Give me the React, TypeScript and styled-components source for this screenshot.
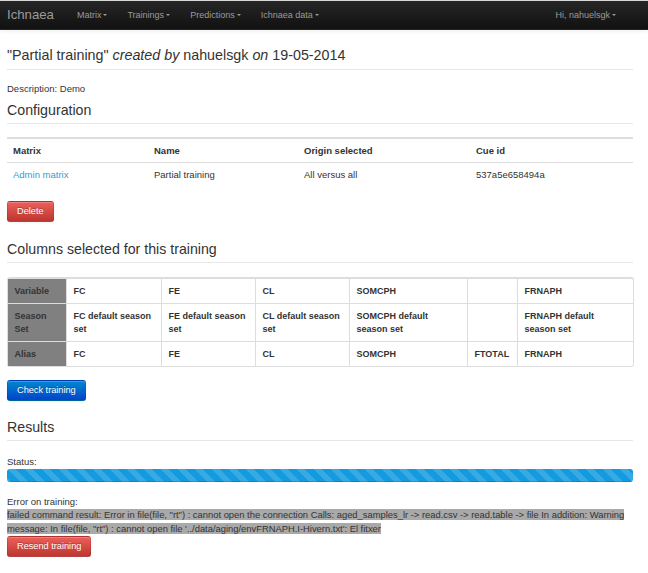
import React from "react";
import styled, { createGlobalStyle } from "styled-components";

const GlobalStyle = createGlobalStyle`
  html, body {
    margin: 0;
    padding: 0;
    background: #ffffff;
  }
  body {
    font-family: "Liberation Sans", Arial, Helvetica, sans-serif;
    font-size: 9.5px;
    line-height: 13px;
    color: #333333;
  }
  * { box-sizing: border-box; }
`;

const Navbar = styled.nav`
  height: 30px;
  border-top: 1px solid #d8d8d8;
  border-bottom: 1px solid #252525;
  background: linear-gradient(to bottom, #262626, #111111);
  box-shadow: 0 1px 4px rgba(0, 0, 0, 0.08);
  display: flex;
  align-items: center;
  padding: 0 22px 0 7px;
`;

const Brand = styled.a`
  font-size: 13.2px;
  color: #9a9a9a;
  text-decoration: none;
  margin-right: 13px;
  line-height: 28px;
`;

const NavList = styled.ul`
  display: flex;
  margin: 0;
  padding: 0;
  list-style: none;
  flex: 1;
`;

const NavRight = styled.ul`
  display: flex;
  margin: 0;
  padding: 0;
  list-style: none;
`;

const NavItem = styled.li`
  padding: 0 10px;
  font-size: 9px;
  color: #9a9a9a;
  line-height: 28px;
  display: flex;
  align-items: center;
`;

const Caret = styled.span`
  display: inline-block;
  width: 0;
  height: 0;
  margin-left: 2px;
  border-top: 2.5px solid #9a9a9a;
  border-left: 2px solid transparent;
  border-right: 2px solid transparent;
`;

const Container = styled.main`
  padding: 0 15px 0 7px;
`;

const PageHeader = styled.h1`
  margin: 15px 0 0;
  padding-bottom: 4px;
  border-bottom: 1px solid #e6e6e6;
  font-size: 14.3px;
  line-height: 20px;
  font-weight: normal;
  color: #333333;
`;

const Description = styled.p`
  margin: 12px 0 0;
  font-size: 9.5px;
  line-height: 13px;
`;

const SectionTitle = styled.h3<{ $top: number }>`
  margin: ${(p) => p.$top}px 0 0;
  padding-bottom: 3px;
  border-bottom: 1px solid #e6e6e6;
  font-size: 14.2px;
  line-height: 20px;
  font-weight: normal;
  color: #333333;
`;

const ConfigTable = styled.table`
  width: 100%;
  margin-top: 13px;
  border-collapse: collapse;
  table-layout: fixed;
  border-top: 2px solid #dddddd;

  th, td {
    text-align: left;
    padding: 5px 6px;
    font-size: 9.5px;
    line-height: 13px;
    vertical-align: top;
  }
  th {
    font-weight: bold;
  }
  td {
    border-top: 1px solid #dddddd;
  }
`;

const Link = styled.a`
  color: #2a9fd8;
  text-decoration: none;
`;

const Button = styled.button<{ $variant: "danger" | "primary"; $top: number }>`
  display: block;
  margin-top: ${(p) => p.$top}px;
  height: 21px;
  padding: 0 9px;
  font-family: inherit;
  font-size: 9.2px;
  line-height: 13px;
  color: #ffffff;
  text-shadow: 0 -1px 0 rgba(0, 0, 0, 0.25);
  border-radius: 3px;
  border: 1px solid;
  border-color: rgba(0, 0, 0, 0.1) rgba(0, 0, 0, 0.1) rgba(0, 0, 0, 0.25);
  box-shadow: inset 0 1px 0 rgba(255, 255, 255, 0.2), 0 1px 2px rgba(0, 0, 0, 0.05);
  background: ${(p) =>
    p.$variant === "danger"
      ? "linear-gradient(to bottom, #ee5f5b, #bd362f)"
      : "linear-gradient(to bottom, #0088cc, #0044cc)"};
  cursor: pointer;
`;

const GridTable = styled.table`
  width: 100%;
  margin-top: 14px;
  border-collapse: separate;
  border-spacing: 0;
  table-layout: fixed;
  border: 1px solid #dddddd;
  border-top: 2px solid #dddddd;
  border-left: 0;
  border-radius: 3px;

  th, td {
    text-align: left;
    padding: 5.5px 6.5px;
    font-size: 9px;
    line-height: 13px;
    font-weight: bold;
    vertical-align: top;
    border-left: 1px solid #dddddd;
    border-top: 1px solid #dddddd;
    color: #333333;
  }
  tr:first-child th, tr:first-child td {
    border-top: 0;
  }
  th {
    background: #808080;
    color: #333333;
  }
`;

const StatusLabel = styled.div<{ $top: number }>`
  margin-top: ${(p) => p.$top}px;
  font-size: 9.5px;
  line-height: 13px;
`;

const Progress = styled.div`
  height: 13px;
  margin-top: 1px;
  border-radius: 3px;
  background: #f5f5f5;
  overflow: hidden;
`;

const Bar = styled.div`
  height: 100%;
  background-color: #149bdf;
  background-image: linear-gradient(
    45deg,
    rgba(255, 255, 255, 0.15) 25%,
    transparent 25%,
    transparent 50%,
    rgba(255, 255, 255, 0.15) 50%,
    rgba(255, 255, 255, 0.15) 75%,
    transparent 75%,
    transparent
  );
  background-size: 17px 17px;
  box-shadow: inset 0 -1px 0 rgba(0, 0, 0, 0.15);
`;

const ErrorText = styled.div`
  font-size: 9.4px;
  line-height: 14px;
`;

const Highlight = styled.span`
  background: #a9a9a9;
  color: #333333;
`;

export default function App() {
  const gridCols = [59, 95, 94, 94, 118, 50, 116];
  return (
    <>
      <GlobalStyle />
      <Navbar>
        <Brand href="#">Ichnaea</Brand>
        <NavList>
          {["Matrix", "Trainings", "Predictions", "Ichnaea data"].map((t) => (
            <NavItem key={t}>
              {t}
              <Caret />
            </NavItem>
          ))}
        </NavList>
        <NavRight>
          <NavItem>
            Hi, nahuelsgk
            <Caret />
          </NavItem>
        </NavRight>
      </Navbar>
      <Container>
        <PageHeader>
          "Partial training" <em>created by</em> nahuelsgk <em>on</em> 19-05-2014
        </PageHeader>
        <Description>Description: Demo</Description>
        <SectionTitle $top={5}>Configuration</SectionTitle>
        <ConfigTable>
          <colgroup>
            <col style={{ width: 141 }} />
            <col style={{ width: 150 }} />
            <col style={{ width: 172 }} />
            <col style={{ width: 163 }} />
          </colgroup>
          <thead>
            <tr>
              <th>Matrix</th>
              <th>Name</th>
              <th>Origin selected</th>
              <th>Cue id</th>
            </tr>
          </thead>
          <tbody>
            <tr>
              <td>
                <Link href="#">Admin matrix</Link>
              </td>
              <td>Partial training</td>
              <td>All versus all</td>
              <td>537a5e658494a</td>
            </tr>
          </tbody>
        </ConfigTable>
        <Button $variant="danger" $top={15}>Delete</Button>
        <SectionTitle $top={17}>Columns selected for this training</SectionTitle>
        <GridTable>
          <colgroup>
            {gridCols.map((w, i) => (
              <col key={i} style={{ width: w }} />
            ))}
          </colgroup>
          <tbody>
            <tr>
              <th>Variable</th>
              <td>FC</td>
              <td>FE</td>
              <td>CL</td>
              <td>SOMCPH</td>
              <td></td>
              <td>FRNAPH</td>
            </tr>
            <tr>
              <th>Season Set</th>
              <td>FC default season set</td>
              <td>FE default season set</td>
              <td>CL default season set</td>
              <td>SOMCPH default season set</td>
              <td></td>
              <td>FRNAPH default season set</td>
            </tr>
            <tr>
              <th>Alias</th>
              <td>FC</td>
              <td>FE</td>
              <td>CL</td>
              <td>SOMCPH</td>
              <td>FTOTAL</td>
              <td>FRNAPH</td>
            </tr>
          </tbody>
        </GridTable>
        <Button $variant="primary" $top={13}>Check training</Button>
        <SectionTitle $top={16}>Results</SectionTitle>
        <StatusLabel $top={14}>Status:</StatusLabel>
        <Progress>
          <Bar />
        </Progress>
        <StatusLabel $top={13}>Error on training:</StatusLabel>
        <ErrorText>
          <Highlight>
            failed command result: Error in file(file, "rt") : cannot open the connection Calls:
            aged_samples_lr -&gt; read.csv -&gt; read.table -&gt; file In addition: Warning message:
            In file(file, "rt") : cannot open file '../data/aging/envFRNAPH.I-Hivern.txt': El fitxer
          </Highlight>
        </ErrorText>
        <Button $variant="danger" $top={0}>Resend training</Button>
      </Container>
    </>
  );
}
